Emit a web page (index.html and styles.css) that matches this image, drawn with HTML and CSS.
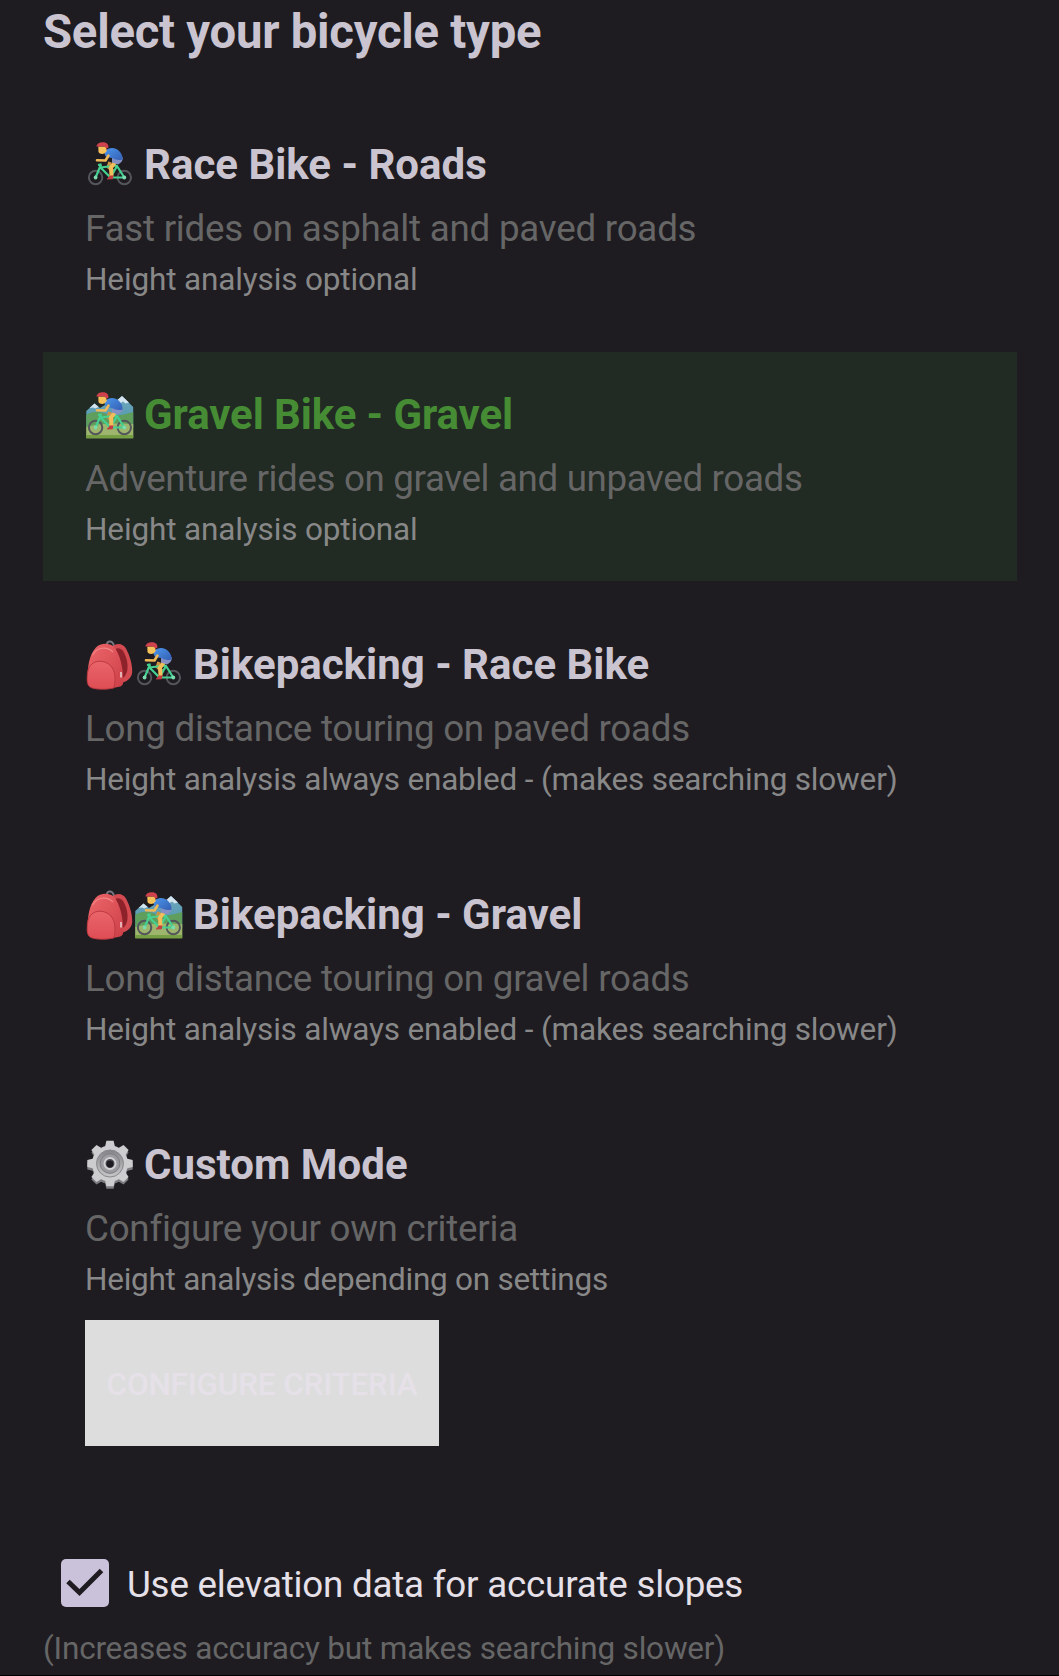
FILE: index.html
```html
<!DOCTYPE html>
<html lang="en">
<head>
<meta charset="utf-8">
<title>Bicycle type</title>
<link rel="stylesheet" href="styles.css">
</head>
<body>
<svg width="0" height="0" class="defs" aria-hidden="true">
  <defs>
    <linearGradient id="shirt" x1="0" y1="0" x2="1" y2="1"><stop offset="0" stop-color="#4a96ec"/><stop offset="1" stop-color="#3560b4"/></linearGradient>
    <linearGradient id="pack" x1="0" y1="0" x2="1" y2="1"><stop offset="0" stop-color="#ee686b"/><stop offset="1" stop-color="#cc3f47"/></linearGradient>
    <linearGradient id="pocket" x1="0" y1="0" x2="0" y2="1"><stop offset="0" stop-color="#e9656a"/><stop offset="1" stop-color="#de4d54"/></linearGradient>
    <linearGradient id="sky" x1="0" y1="0" x2="0" y2="1"><stop offset="0" stop-color="#6fa6bd"/><stop offset="1" stop-color="#4d97ad"/></linearGradient>
    <linearGradient id="steel2" x1="0" y1="0" x2="0" y2="1"><stop offset="0" stop-color="#858589"/><stop offset="1" stop-color="#c8c8ca"/></linearGradient>
    <g id="rider">
      <path d="M30 27 28.500 32 33 36" fill="none" stroke="#cf9440" stroke-width="3.600"/>
      <g class="wheels" fill="none" stroke-width="2"><circle cx="15.600" cy="42.500" r="6.700"/><circle cx="44.300" cy="42.500" r="6.700"/></g>
      <path d="M15.600 42.500 21 29.500M18 30l3.600-.8M20.500 32.500 30.500 42.500 37 31 44.300 42.500H30.500M20.500 32.500 36.500 30.500" fill="none" stroke="#45d092" stroke-width="2.200" stroke-linejoin="round"/>
      <circle cx="15.600" cy="42.500" r="1.900" fill="#7bdcae"/><circle cx="44.300" cy="42.500" r="1.900" fill="#7bdcae"/>
      <path d="M36 26 31 32.500 31.500 41.500" fill="none" stroke="#f2bd5a" stroke-width="4" stroke-linejoin="round"/>
      <path d="M29.400 40.500h4l-.7 3.700-5.800.4c0-1.600 2.200-1.800 2.500-4.100z" fill="#c43c42"/>
      <path d="M32 22.500 42.500 22c.8 3-1.200 6-4.500 7.500l-6-2z" fill="#8590c4"/>
      <path d="M25.500 15.500c4-4 11-3.300 14.500 1.500 2 2.500 2.800 5 2.500 7.400-3.500 1.200-6.500.6-10-1.100l-6.500-1.600c-1.600-1.800-1.700-4.300-.5-6.200z" fill="url(#shirt)"/>
      <path d="M28.500 20.500 25.500 25.500 17 25.300" fill="none" stroke="#efb957" stroke-width="2.600" stroke-linejoin="round" stroke-linecap="round"/>
      <path d="M18.300 11.500h7.500l1 4.500-2.300 2.600c-2.700.7-5.200.3-6-1.500z" fill="#f6c25c"/>
      <path d="M16.300 11.500C17 8 20.500 6.700 24 7.300c3.300.6 5 3 4.300 5.500l-1.800 1-2-2.300z" fill="#cf414c"/>
    </g>
    <symbol id="race" viewBox="0 0 60 60"><use href="#rider" class="on-dark"/></symbol>
    <symbol id="gravel" viewBox="0 0 60 60">
      <path d="M6.300 26 14.500 18.500 20 23 28 18 34 18 42 11 53.200 22V43H6.300z" fill="url(#sky)"/>
      <path d="m9.500 23 5-4.500 4.200 3.500-3.500 1.500-2-1zM36.500 15.800 42 11l7 6.500-3.500 1-2.500-2-3 2z" fill="#d3e4ee"/>
      <path d="M6.300 30c6-4 13-4 20-1s18 1 26.900-2v25H6.300z" fill="#5f9e5c"/>
      <path d="M6.300 42c12-4 28-4 46.900-3v14.300H6.300z" fill="#9db56c"/>
      <path d="M6.300 50h46.900v3.300H6.300z" fill="#769f43"/>
      <use href="#rider" class="on-land"/>
    </symbol>
    <symbol id="backpack" viewBox="0 0 60 60">
      <path d="M27 9.500C27 5 33 5.500 34 11" fill="none" stroke="#77777f" stroke-width="2"/>
      <path d="M32 12C36 7.500 43 8 46 13.500 50 21 52.500 30 52.200 37c-.2 5-4 9-9.200 10.500z" fill="#d44a51"/>
      <path d="M35 14C41 11 45 17 47 26c1.300 7 .5 13-4 17z" fill="#8e222b"/>
      <path d="M15.500 13C20 8 29 7.500 33.500 11.500 40 18 43.500 34 43.200 47c0 3-1.500 4.300-4 4.800-8 2-20 2.500-27 .8C8.500 51 7.300 48 7.500 44 7.500 33 9 20 15.500 13z" fill="url(#pack)"/>
      <path d="M7.500 38C8.500 30 14 26 20 26.200 29 26.500 34.500 33 35 42c0 5-.2 8-1.200 11C25 55 14 54.500 10 52c-3.500-2.500-3-8-2.500-14z" fill="url(#pocket)" stroke="#b93640" stroke-width=".9"/>
      <path d="M12.500 20C17 12 27 11 33 17" fill="none" stroke="#f48688" stroke-width="1.200"/>
      <path d="M41 37v5.500" stroke="#e8d8da" stroke-width="1.500"/>
    </symbol>
    <symbol id="gear" viewBox="0 0 60 60">
      <g fill="#7b7b80" transform="translate(0 2.500)"><circle cx="30" cy="28.500" r="18"/><path id="teeth" d="m25 12 1.400-6.200h7.200L35 12v33l-1.400 6.200h-7.200L25 45z"/><use href="#teeth" transform="rotate(45 30 28.500)"/><use href="#teeth" transform="rotate(90 30 28.500)"/><use href="#teeth" transform="rotate(135 30 28.500)"/></g>
      <g fill="#cdcdd0"><circle cx="30" cy="28.500" r="18"/><use href="#teeth"/><use href="#teeth" transform="rotate(45 30 28.500)"/><use href="#teeth" transform="rotate(90 30 28.500)"/><use href="#teeth" transform="rotate(135 30 28.500)"/></g>
      <circle cx="30" cy="28.500" r="13.500" fill="url(#steel2)" stroke="#88888c"/>
      <circle cx="30" cy="28.500" r="9.800" fill="#9d9da1" stroke="#7d7d82"/>
      <circle cx="30" cy="28.500" r="5.500" fill="#4f4f55" stroke="#d2d2d4" stroke-width="2"/>
      <circle cx="30" cy="29" r="3.400" fill="#1e1c21"/>
    </symbol>
  </defs>
</svg>
<main class="screen">
  <h1 class="title">Select your bicycle type</h1>
  <section class="modes">
    <article class="mode race">
      <h2 class="name"><svg class="emoji"><use href="#race"/></svg><span class="label">Race Bike - Roads</span></h2>
      <p class="desc">Fast rides on asphalt and paved roads</p>
      <p class="note">Height analysis optional</p>
    </article>
    <article class="mode selected">
      <h2 class="name"><svg class="emoji"><use href="#gravel"/></svg><span class="label">Gravel Bike - Gravel</span></h2>
      <p class="desc">Adventure rides on gravel and unpaved roads</p>
      <p class="note">Height analysis optional</p>
    </article>
    <article class="mode packing">
      <h2 class="name"><svg class="emoji"><use href="#backpack"/></svg><svg class="emoji"><use href="#race"/></svg><span class="label">Bikepacking - Race Bike</span></h2>
      <p class="desc">Long distance touring on paved roads</p>
      <p class="note">Height analysis always enabled - (makes searching slower)</p>
    </article>
    <article class="mode packing">
      <h2 class="name"><svg class="emoji"><use href="#backpack"/></svg><svg class="emoji"><use href="#gravel"/></svg><span class="label">Bikepacking - Gravel</span></h2>
      <p class="desc">Long distance touring on gravel roads</p>
      <p class="note">Height analysis always enabled - (makes searching slower)</p>
    </article>
    <article class="mode custom">
      <h2 class="name"><svg class="emoji"><use href="#gear"/></svg><span class="label">Custom Mode</span></h2>
      <p class="desc">Configure your own criteria</p>
      <p class="note">Height analysis depending on settings</p>
      <button class="configure">CONFIGURE CRITERIA</button>
    </article>
  </section>
  <div class="elevation">
    <svg class="check" viewBox="0 0 48 48"><rect width="48" height="48" rx="5" fill="#cac1da"/><path d="m7 22.500 11.500 11L40.500 11.500" fill="none" stroke="#1e1c21" stroke-width="5"/></svg>
    <span class="check-label">Use elevation data for accurate slopes</span>
  </div>
  <p class="hint">(Increases accuracy but makes searching slower)</p>
</main>
</body>
</html>
```
FILE: styles.css
```css
* { box-sizing: border-box; margin: 0; padding: 0; }
body { background: #1e1c21; font-family: Roboto, "Liberation Sans", sans-serif; }
.defs { display: block; position: absolute; }
.screen { height: 1676px; padding: 0 42px 0 43px; overflow: hidden; border-bottom: 1px solid #000; }
.title { height: 102px; padding-top: 4px; font-size: 47.25px; line-height: 56px; font-weight: 700; letter-spacing: -0.24px; color: #cac4d0; white-space: nowrap; }
.modes { display: flex; flex-direction: column; gap: 21px; }
.mode { height: 229px; padding: 36px 42px 0; white-space: nowrap; }
.mode.custom { height: 386px; }
.selected { background: #212a23; }
.name { display: flex; align-items: center; height: 53px; font-size: 42px; line-height: 53px; font-weight: 700; color: #cac4d0; }
.selected .name { color: #468c34; letter-spacing: -0.1px; }
.emoji { width: 60px; height: 60px; margin: 0 -6px 0 -5px; flex: none; }
.wheels { stroke: #55565b; }
.on-land .wheels { stroke: #46544c; }
.label { margin-left: 10px; }
.desc { margin-top: 16px; font-size: 36.75px; line-height: 44px; letter-spacing: -0.26px; color: #666; }
.race .desc { letter-spacing: -0.23px; }
.selected .desc { letter-spacing: -0.36px; }
.note { margin-top: 10px; font-size: 31.5px; line-height: 38px; letter-spacing: -0.14px; color: #888; }
.packing .note { letter-spacing: -0.18px; }
.custom .note { letter-spacing: -0.26px; }
.configure { display: block; width: 354px; height: 126px; margin-top: 21px; padding-top: 3px; border: 0; background: #ddd; color: #e6e1e9; font: 500 31.5px/123px Roboto, sans-serif; letter-spacing: -0.18px; }
.elevation { display: flex; align-items: center; height: 92px; padding-left: 18px; margin-top: 49px; }
.check { width: 48px; height: 48px; flex: none; }
.check-label { margin: 4px 0 0 18px; font-size: 36.75px; line-height: 44px; letter-spacing: -0.21px; color: #e6e0e9; white-space: nowrap; }
.hint { margin-top: 1px; font-size: 31.5px; line-height: 38px; letter-spacing: -0.2px; color: #666; white-space: nowrap; }
```
